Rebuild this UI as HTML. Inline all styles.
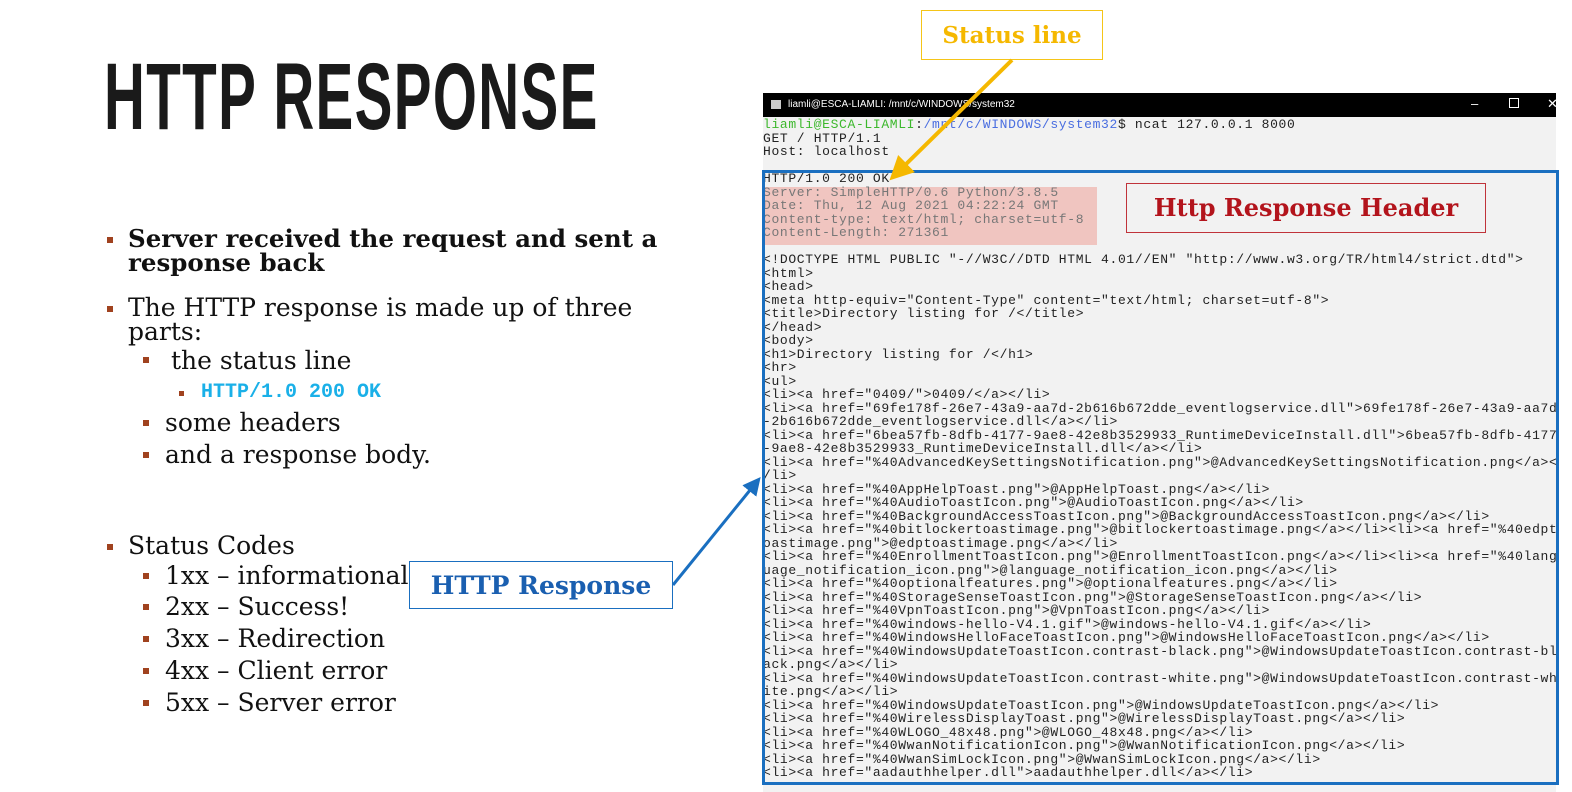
<!DOCTYPE html>
<html><head><meta charset="utf-8"><style>
body{margin:0;width:1572px;height:792px;background:#fff;position:relative;overflow:hidden;font-family:"DejaVu Serif",serif}
.a{position:absolute;white-space:nowrap}
.title{left:104px;top:44px;font-family:"Liberation Sans",sans-serif;font-weight:bold;font-size:82px;color:#1a1a1a;transform:scale(0.69,1.15);transform-origin:0 0;letter-spacing:2px}
.b{position:absolute;width:6px;height:6px;background:#a0421f}
.t{font-size:25px;color:#111;line-height:24px}
.term{position:absolute;left:763px;top:93px;width:793px;height:699px;background:#f2f2f2;overflow:hidden}
.bar{position:absolute;left:0;top:0;width:794px;height:24px;background:#000;color:#fff;font-family:"Liberation Sans",sans-serif;font-size:10px}
pre{position:absolute;margin:0;font-family:"Liberation Mono",monospace;font-size:13px;letter-spacing:0.65px;line-height:13.5px;color:#222}
</style></head><body>
<div class="a title">HTTP RESPONSE</div>

<div class="b" style="left:107px;top:237px"></div>
<div class="a t" style="left:128px;top:227px;font-weight:bold;font-size:24.5px">Server received the request and sent a<br>response back</div>
<div class="b" style="left:107px;top:306px"></div>
<div class="a t" style="left:128px;top:296px">The HTTP response is made up of three<br>parts:</div>
<div class="b" style="left:143px;top:357px"></div>
<div class="a t" style="left:171px;top:349px">the status line</div>
<div class="b" style="left:179px;top:391px;width:5px;height:5px"></div>
<div class="a" style="left:201px;top:381px;font-family:'Liberation Mono',monospace;font-weight:bold;font-size:20px;color:#1ab0e8">HTTP/1.0 200 OK</div>
<div class="b" style="left:143px;top:420px"></div>
<div class="a t" style="left:165px;top:411px">some headers</div>
<div class="b" style="left:143px;top:452px"></div>
<div class="a t" style="left:165px;top:443px">and a response body.</div>

<div class="b" style="left:107px;top:544px"></div>
<div class="a t" style="left:128px;top:534px">Status Codes</div>
<div class="b" style="left:143px;top:573px"></div><div class="a t" style="left:165px;top:564px">1xx – informational</div>
<div class="b" style="left:143px;top:604px"></div><div class="a t" style="left:165px;top:595px">2xx – Success!</div>
<div class="b" style="left:143px;top:636px"></div><div class="a t" style="left:165px;top:627px">3xx – Redirection</div>
<div class="b" style="left:143px;top:668px"></div><div class="a t" style="left:165px;top:659px">4xx – Client error</div>
<div class="b" style="left:143px;top:700px"></div><div class="a t" style="left:165px;top:691px">5xx – Server error</div>

<div class="term">
<div class="bar"><span style="position:absolute;left:8px;top:7px;width:10px;height:9px;background:#ccc"></span><span style="position:absolute;left:25px;top:6px">liamli@ESCA-LIAMLI: /mnt/c/WINDOWS/system32</span><span style="position:absolute;left:708px;top:3px;font-size:13px">–</span><span style="position:absolute;left:746px;top:5px;width:8px;height:8px;border:1px solid #fff"></span><span style="position:absolute;left:784px;top:3px;font-size:13px">✕</span></div>
<div style="position:absolute;left:0;top:94px;width:334px;height:58px;background:#f0c5c0"></div>
<pre style="left:0;top:25px"><span style="color:#3cb82c">liamli@ESCA-LIAMLI</span>:<span style="color:#4a6ee0">/mnt/c/WINDOWS/system32</span>$ ncat 127.0.0.1 8000
GET / HTTP/1.1
Host: localhost</pre>
<pre style="left:0;top:79px">HTTP/1.0 200 OK
<span style="color:#777">Server: SimpleHTTP/0.6 Python/3.8.5
Date: Thu, 12 Aug 2021 04:22:24 GMT
Content-type: text/html; charset=utf-8
Content-Length: 271361</span>

&lt;!DOCTYPE HTML PUBLIC "-//W3C//DTD HTML 4.01//EN" "http://www.w3.org/TR/html4/strict.dtd"&gt;
&lt;html&gt;
&lt;head&gt;
&lt;meta http-equiv="Content-Type" content="text/html; charset=utf-8"&gt;
&lt;title&gt;Directory listing for /&lt;/title&gt;
&lt;/head&gt;
&lt;body&gt;
&lt;h1&gt;Directory listing for /&lt;/h1&gt;
&lt;hr&gt;
&lt;ul&gt;
&lt;li&gt;&lt;a href="0409/"&gt;0409/&lt;/a&gt;&lt;/li&gt;
&lt;li&gt;&lt;a href="69fe178f-26e7-43a9-aa7d-2b616b672dde_eventlogservice.dll"&gt;69fe178f-26e7-43a9-aa7d
-2b616b672dde_eventlogservice.dll&lt;/a&gt;&lt;/li&gt;
&lt;li&gt;&lt;a href="6bea57fb-8dfb-4177-9ae8-42e8b3529933_RuntimeDeviceInstall.dll"&gt;6bea57fb-8dfb-4177
-9ae8-42e8b3529933_RuntimeDeviceInstall.dll&lt;/a&gt;&lt;/li&gt;
&lt;li&gt;&lt;a href="%40AdvancedKeySettingsNotification.png"&gt;@AdvancedKeySettingsNotification.png&lt;/a&gt;&lt;
/li&gt;
&lt;li&gt;&lt;a href="%40AppHelpToast.png"&gt;@AppHelpToast.png&lt;/a&gt;&lt;/li&gt;
&lt;li&gt;&lt;a href="%40AudioToastIcon.png"&gt;@AudioToastIcon.png&lt;/a&gt;&lt;/li&gt;
&lt;li&gt;&lt;a href="%40BackgroundAccessToastIcon.png"&gt;@BackgroundAccessToastIcon.png&lt;/a&gt;&lt;/li&gt;
&lt;li&gt;&lt;a href="%40bitlockertoastimage.png"&gt;@bitlockertoastimage.png&lt;/a&gt;&lt;/li&gt;&lt;li&gt;&lt;a href="%40edpt
oastimage.png"&gt;@edptoastimage.png&lt;/a&gt;&lt;/li&gt;
&lt;li&gt;&lt;a href="%40EnrollmentToastIcon.png"&gt;@EnrollmentToastIcon.png&lt;/a&gt;&lt;/li&gt;&lt;li&gt;&lt;a href="%40lang
uage_notification_icon.png"&gt;@language_notification_icon.png&lt;/a&gt;&lt;/li&gt;
&lt;li&gt;&lt;a href="%40optionalfeatures.png"&gt;@optionalfeatures.png&lt;/a&gt;&lt;/li&gt;
&lt;li&gt;&lt;a href="%40StorageSenseToastIcon.png"&gt;@StorageSenseToastIcon.png&lt;/a&gt;&lt;/li&gt;
&lt;li&gt;&lt;a href="%40VpnToastIcon.png"&gt;@VpnToastIcon.png&lt;/a&gt;&lt;/li&gt;
&lt;li&gt;&lt;a href="%40windows-hello-V4.1.gif"&gt;@windows-hello-V4.1.gif&lt;/a&gt;&lt;/li&gt;
&lt;li&gt;&lt;a href="%40WindowsHelloFaceToastIcon.png"&gt;@WindowsHelloFaceToastIcon.png&lt;/a&gt;&lt;/li&gt;
&lt;li&gt;&lt;a href="%40WindowsUpdateToastIcon.contrast-black.png"&gt;@WindowsUpdateToastIcon.contrast-bl
ack.png&lt;/a&gt;&lt;/li&gt;
&lt;li&gt;&lt;a href="%40WindowsUpdateToastIcon.contrast-white.png"&gt;@WindowsUpdateToastIcon.contrast-wh
ite.png&lt;/a&gt;&lt;/li&gt;
&lt;li&gt;&lt;a href="%40WindowsUpdateToastIcon.png"&gt;@WindowsUpdateToastIcon.png&lt;/a&gt;&lt;/li&gt;
&lt;li&gt;&lt;a href="%40WirelessDisplayToast.png"&gt;@WirelessDisplayToast.png&lt;/a&gt;&lt;/li&gt;
&lt;li&gt;&lt;a href="%40WLOGO_48x48.png"&gt;@WLOGO_48x48.png&lt;/a&gt;&lt;/li&gt;
&lt;li&gt;&lt;a href="%40WwanNotificationIcon.png"&gt;@WwanNotificationIcon.png&lt;/a&gt;&lt;/li&gt;
&lt;li&gt;&lt;a href="%40WwanSimLockIcon.png"&gt;@WwanSimLockIcon.png&lt;/a&gt;&lt;/li&gt;
&lt;li&gt;&lt;a href="aadauthhelper.dll"&gt;aadauthhelper.dll&lt;/a&gt;&lt;/li&gt;</pre>
</div>
<div style="position:absolute;left:762px;top:170px;width:791px;height:609px;border:3px solid #1a6fc0"></div>

<div class="a" style="left:1126px;top:183px;width:358px;height:48px;border:1.5px solid #c0333a;background:#f2f2f2;color:#b3141c;font-weight:bold;font-size:24px;text-align:center;line-height:48px">Http Response Header</div>
<div class="a" style="left:921px;top:10px;width:180px;height:48px;border:1.5px solid #f5c518;background:#fff;color:#f5b800;font-weight:bold;font-size:23px;text-align:center;line-height:50px">Status line</div>
<div class="a" style="left:409px;top:561px;width:262px;height:46px;border:1.5px solid #1a6fc0;background:#fff;color:#1a5fb0;font-weight:bold;font-size:25px;text-align:center;line-height:48px">HTTP Response</div>

<svg style="position:absolute;left:0;top:0" width="1572" height="792">
<defs>
<marker id="y" markerWidth="6" markerHeight="6" refX="3" refY="3" orient="auto"><path d="M0,0L6,3L0,6z" fill="#f5b800"/></marker>
<marker id="bl" markerWidth="6" markerHeight="6" refX="3" refY="3" orient="auto"><path d="M0,0L6,3L0,6z" fill="#1a6fc0"/></marker>
</defs>
<line x1="1012" y1="60" x2="898" y2="172" stroke="#f5b800" stroke-width="4" marker-end="url(#y)"/>
<line x1="673" y1="585" x2="755" y2="484" stroke="#1a6fc0" stroke-width="3" marker-end="url(#bl)"/>
</svg>
</body></html>
